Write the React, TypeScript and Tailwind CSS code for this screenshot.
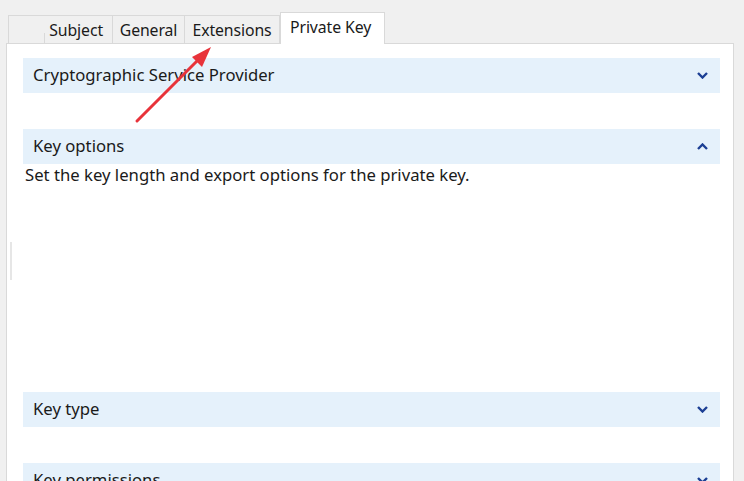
import React from "react";

const font = { fontFamily: '"Noto Sans", "Segoe UI", sans-serif' };

function Chevron({ up }: { up?: boolean }) {
  return (
    <svg width="11" height="7" viewBox="0 0 11 7" className="shrink-0">
      <path
        d={up ? "M1 6 L5.5 1.5 L10 6" : "M1 1 L5.5 5.5 L10 1"}
        fill="none"
        stroke="#1c3f94"
        strokeWidth="2.4"
      />
    </svg>
  );
}

function Header({ title, up }: { title: string; up?: boolean }) {
  return (
    <div className="flex h-[35px] items-center justify-between bg-[#e5f1fb] pb-[1px] pl-[10px] pr-[12px]">
      <span className="text-[16.7px] text-[#1a1a1a]">{title}</span>
      <Chevron up={up} />
    </div>
  );
}

const tabs = [
  { label: "Subject", w: "w-[105px] justify-end pr-[9px] border-l" },
  { label: "General", w: "w-[72px] justify-center" },
  { label: "Extensions", w: "w-[95px] justify-center" },
];

export default function App() {
  return (
    <div className="relative h-[481px] w-[744px] overflow-hidden bg-[#f0f0f0]" style={font}>
      {/* tab strip */}
      <div className="flex h-[43px] items-end pl-[8px]">
        {tabs.map((t, i) => (
          <div
            key={t.label}
            className={[
              "relative flex h-[28px] items-center border-t border-r border-[#d9d9d9] pt-[3px] text-[15.8px] tracking-[-0.1px] text-[#1a1a1a]",
              t.w,
            ].join(" ")}
          >
            {i === 0 ? <span className="absolute bottom-0 left-[35px] h-[10px] w-px bg-[#d9d9d9]" /> : null}
            {t.label}
          </div>
        ))}
        <div className="relative z-10 -mb-px flex h-[32px] w-[105px] items-center border-x border-t border-[#d9d9d9] bg-white pb-[2px] pl-[9px] text-[15.8px] tracking-[-0.1px] text-[#1a1a1a]">
          Private Key
        </div>
      </div>

      {/* panel */}
      <div className="ml-[6px] mr-[10px] h-[440px] border border-[#d9d9d9] bg-white pl-[16px] pr-[13px] pt-[14px]">
        <Header title="Cryptographic Service Provider" />
        <div className="h-[36px]" />
        <Header title="Key options" up />
        <div className="h-[229px] pl-[2px] leading-[24px] -mt-[1px] text-[16.7px] text-[#1a1a1a]">
          Set the key length and export options for the private key.
        </div>
        <Header title="Key type" />
        <div className="h-[36px]" />
        <Header title="Key permissions" />
      </div>

      {/* faint line on left */}
      <div className="absolute left-[10px] top-[242px] h-[38px] w-[2px] bg-[#e6e6e6]" />

      {/* red arrow */}
      <svg className="absolute left-0 top-0" width="744" height="481">
        <line x1="137" y1="121" x2="200" y2="58" stroke="#e8333a" strokeWidth="3" strokeLinecap="round" />
        <polygon points="211,47 192,57 202,67" fill="#e8333a" />
      </svg>
    </div>
  );
}
